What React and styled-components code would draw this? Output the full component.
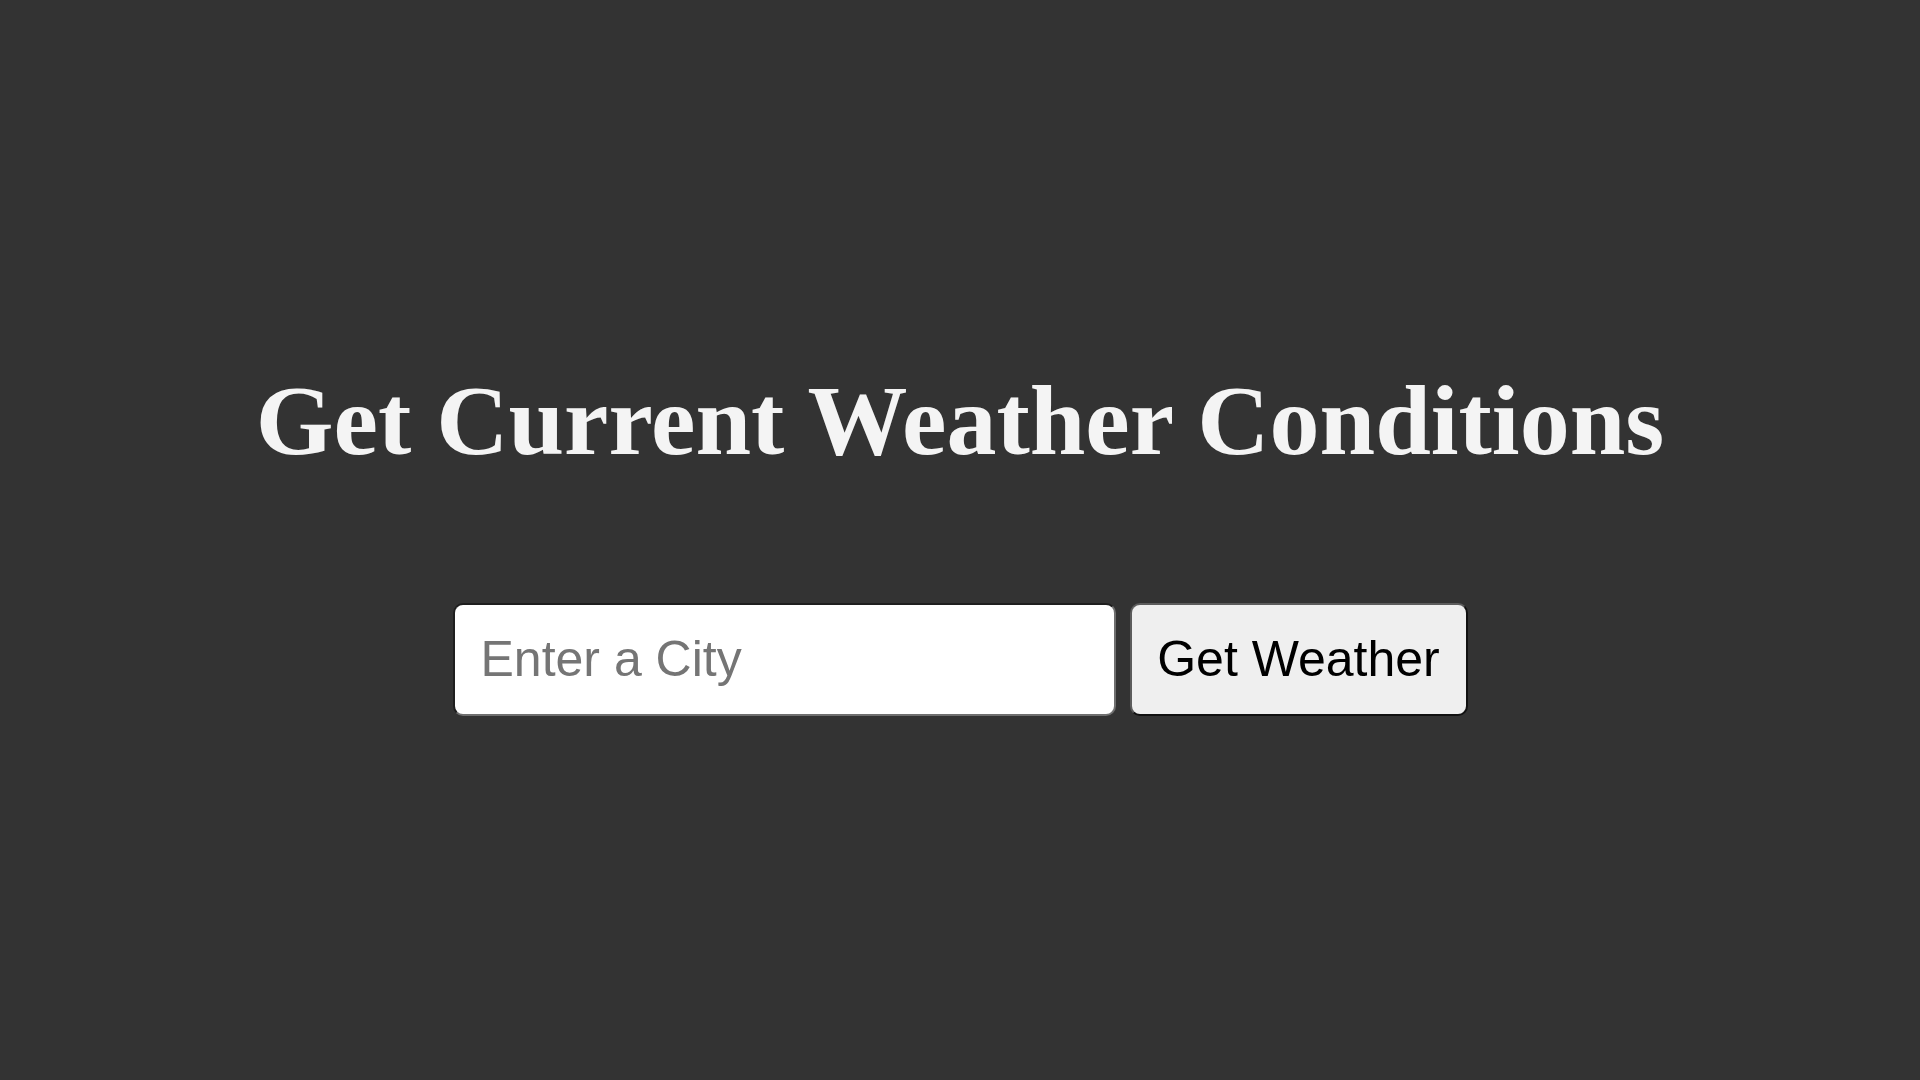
import React from "react";
import styled, { createGlobalStyle } from "styled-components";

const GlobalStyle = createGlobalStyle`
  html, body {
    margin: 0;
    padding: 0;
    background: #333333;
  }
  * { box-sizing: border-box; }
`;

const Page = styled.main`
  min-height: 100vh;
  display: flex;
  flex-direction: column;
  align-items: center;
  justify-content: center;
  gap: 127px;
`;

const Title = styled.h1`
  margin: 0;
  font-family: "Liberation Serif", "Times New Roman", serif;
  font-weight: bold;
  font-size: 100px;
  line-height: 111px;
  color: #f4f4f4;
`;

const Form = styled.form`
  display: flex;
  align-items: stretch;
  gap: 14px;
  margin: 0;
`;

const CityInput = styled.input`
  width: 663px;
  height: 113px;
  padding: 0 26px;
  font-family: "Liberation Sans", Arial, sans-serif;
  font-size: 50px;
  color: #000;
  background: #ffffff;
  border: 2px solid;
  border-color: #1e1e1e #6f6f6f #6f6f6f #1e1e1e;
  border-radius: 10px;
  outline: none;
  &::placeholder {
    color: #757575;
  }
`;

const SubmitButton = styled.button`
  width: 338px;
  height: 113px;
  padding: 0;
  font-family: "Liberation Sans", Arial, sans-serif;
  font-size: 50px;
  color: #000;
  background: #efefef;
  border: 2px solid;
  border-color: #5c5c5c #111111 #111111 #5c5c5c;
  border-radius: 10px;
  cursor: pointer;
`;

export default function App() {
  return (
    <>
      <GlobalStyle />
      <Page>
        <Title>Get Current Weather Conditions</Title>
        <Form onSubmit={(e) => e.preventDefault()}>
          <CityInput type="text" placeholder="Enter a City" />
          <SubmitButton type="submit">Get Weather</SubmitButton>
        </Form>
      </Page>
    </>
  );
}
